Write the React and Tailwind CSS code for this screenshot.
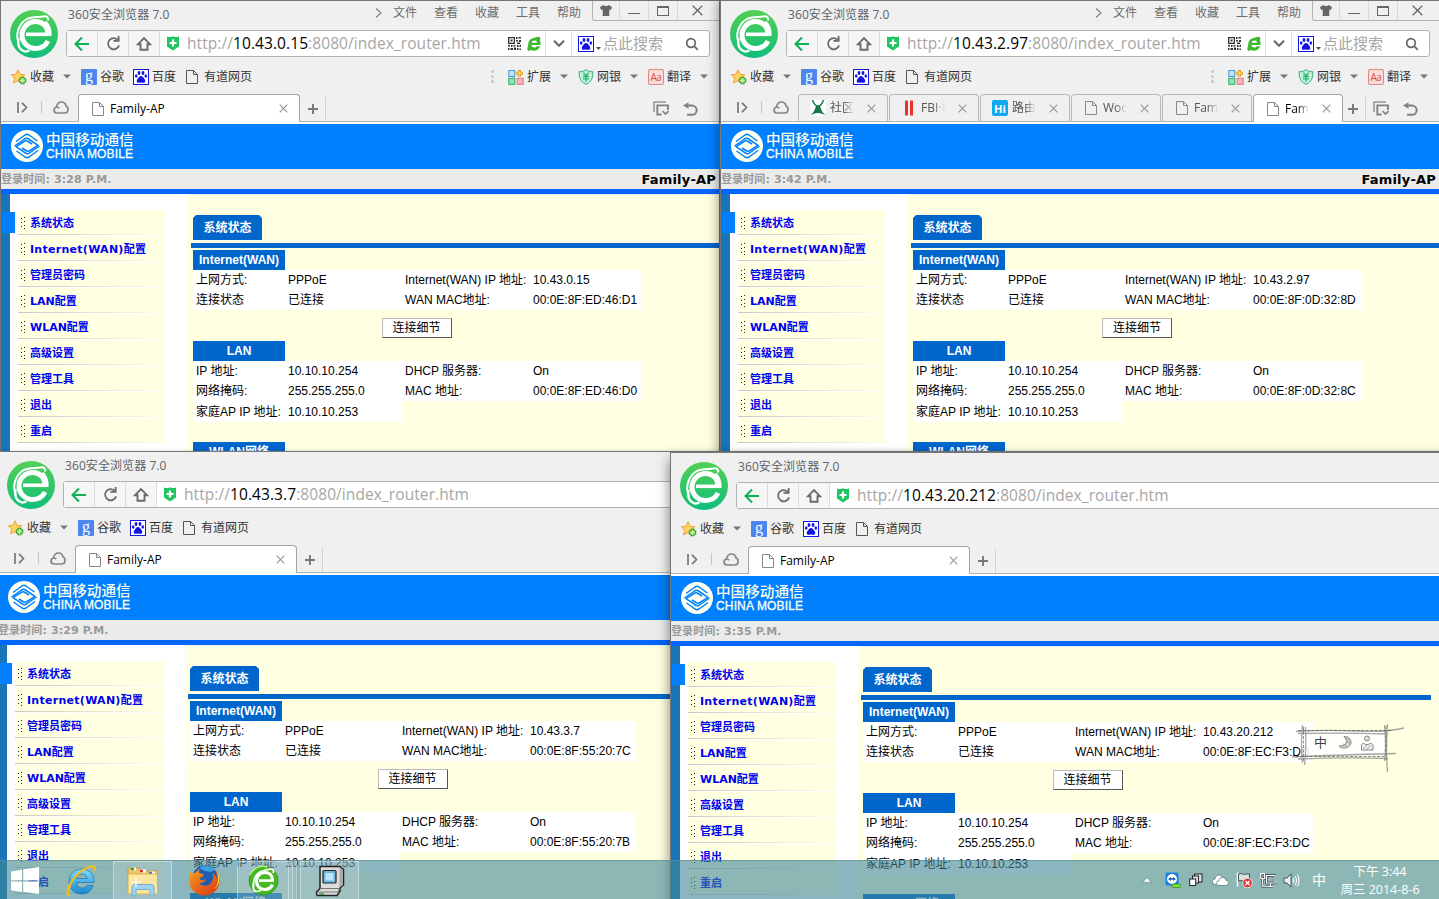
import React from "react";

const UI = "font-['Open_Sans','Noto_Sans_CJK_SC',sans-serif]";
const ARIAL = "font-['Liberation_Sans','Noto_Sans_CJK_SC',sans-serif]";
const VERDANA = "font-['DejaVu_Sans','Noto_Sans_CJK_SC',sans-serif]";

/* ---------- browser icons ---------- */

function BrowserLogo() {
  return (
    <svg className="block h-12 w-12 shrink-0" viewBox="0 0 48 48">
      <defs>
        <linearGradient id="logoGreen" x1="0" y1="0" x2="0" y2="1">
          <stop offset="0" stopColor="#52d053" />
          <stop offset="1" stopColor="#0fbe7c" />
        </linearGradient>
      </defs>
      <circle cx="24" cy="24" r="24" fill="url(#logoGreen)" />
      <g fill="none" stroke="#fff">
        <path d="M38 24.500C38 16 32 11.500 26 11.500c-8 0-14 6-14 13.500S18 38.500 25.500 38.500c6 0 10-2.500 12.500-7.500" strokeWidth="5" />
        <path d="M16 24.300h24.500" strokeWidth="3.600" />
        <path d="M8.500 33C5 24 9 14 16 9.500 22 6 29 7.500 33 6.500c3-1 6 .5 5 4" strokeWidth="2" />
        <path d="M8.500 28c-1 6 0 11 5 13 2 .8 4 .5 6-.5" strokeWidth="2.400" />
      </g>
      <path d="M41.500 26h-6c0-6-1-9-4-12l5-3c4 4 5.500 9 5 15z" fill="#fff" />
    </svg>
  );
}

const Back = () => (
  <svg className="h-4 w-4" viewBox="0 0 16 16" fill="none" stroke="#12b053" strokeWidth="2">
    <path d="M1.500 8H15M8 1.500L1.500 8 8 14.500" />
  </svg>
);
const Reload = () => (
  <svg className="h-[15px] w-[15px]" viewBox="0 0 16 16" fill="none" stroke="#6a6a6a" strokeWidth="1.900">
    <path d="M13 4.500A6 6 0 1 0 14 10M13.500 0V5.300H8" />
  </svg>
);
const Home = () => (
  <svg className="h-4 w-4" viewBox="0 0 16 16" fill="none" stroke="#6a6a6a" strokeWidth="1.900">
    <path d="M4.500 8.200H2L8 2l6 6.200h-2.500v5.600h-7z" />
  </svg>
);
const Shield = () => (
  <svg className="h-[15px] w-3 shrink-0" viewBox="0 0 12 15">
    <path d="M0 .5c2 .8 4 .8 6-.3 2 1.100 4 1.100 6 .3v10L6 14.500 0 10.500z" fill="#1fc463" />
    <path d="M6 3.500v7M2.500 7h7" stroke="#fff" strokeWidth="2.200" />
  </svg>
);
const Qr = () => (
  <svg className="h-[13px] w-[13px] shrink-0" viewBox="0 0 13 13" fill="#333">
    <path fillRule="evenodd" d="M0 0h7v7H0zM1.300 1.300v4.400h4.400V1.300zM2.500 2.500h2v2h-2zM8 0h1.500v2H8zM10.500 0H13v1.500h-2.500zM8 3h2v1.500H8zM11 3h2v2h-2zM9 5.500h3V7H9zM0 8h2v1.500H0zM3 8h1.500v2H3zM5.500 8h2v1.500h-2zM0 11h1.500v2H0zM2.500 11H5v2H2.500zM6 10.500h2V13H6zM9 8h1.500v2H9zM11.500 8H13v2h-1.500zM9 11h1.500v2H9zM11.500 11.500H13V13h-1.500z" />
  </svg>
);
const MiniE = ({ className }) => (
  <svg className={className} viewBox="1 0 14 16">
    <path
      d="M14.500 9H5.500c.3 1.800 1.400 2.500 2.800 2.500 1.100 0 2-.4 2.500-1.200h3.400C13.200 13 11 14.700 8.200 14.700c-1 0-2-.2-2.800-.6C4 15 2.500 15.200 1.800 14.300.9 13 1.500 11 2.200 9.500 2 4.800 4.800 2 8.800 1.700 10.500.6 13.200.3 14 1.300c.6.900.3 2-.2 3 .8 1.300 1 3 .7 4.700z"
      fill="#3fb82f"
    />
    <path d="M5.600 6.800h5.600C11 5.300 9.900 4.500 8.500 4.500 7 4.500 5.900 5.300 5.600 6.800z" fill="#fff" />
  </svg>
);
const Paw = ({ className }) => (
  <svg className={className} viewBox="0 0 16 16">
    <rect x=".5" y=".5" width="15" height="15" fill="#fff" stroke="#1414e6" />
    <g fill="#1414e6">
      <ellipse cx="6" cy="4" rx="1.400" ry="1.900" />
      <ellipse cx="10" cy="4" rx="1.400" ry="1.900" />
      <ellipse cx="3.200" cy="7" rx="1.300" ry="1.700" />
      <ellipse cx="12.800" cy="7" rx="1.300" ry="1.700" />
      <path d="M8 7c1.600 0 2.300 1.600 3.300 2.700 1.200 1.200 1.500 3.800-.6 4.100-1 .1-1.700-.3-2.700-.3s-1.700.4-2.700.3c-2.100-.3-1.800-2.900-.6-4.100C5.700 8.600 6.400 7 8 7z" />
    </g>
  </svg>
);
const SearchGlyph = () => (
  <svg className="h-[14px] w-[14px] shrink-0" viewBox="0 0 14 14" fill="none" stroke="#666" strokeWidth="1.700">
    <circle cx="6" cy="6" r="4.300" />
    <path d="M9.200 9.200L12.800 12.800" />
  </svg>
);
const Star = () => (
  <svg className="h-4 w-4 shrink-0" viewBox="0 0 16 16">
    <path d="M7 .8l2 4.500 4.800.5-3.600 3.400 1 4.800L7 11.600 2.600 14l1-4.800L.3 5.800l4.700-.5z" fill="#ffd45e" stroke="#e8a33a" />
    <path d="M11.500 7.800v7.400M7.800 11.500h7.400" stroke="#2f9a1e" strokeWidth="4" />
    <path d="M11.500 8.800v5.400M8.800 11.500h5.400" stroke="#c5f59a" strokeWidth="2" />
  </svg>
);
const Page = ({ stroke = "#555" }) => (
  <svg className="h-[14px] w-3 shrink-0" viewBox="0 0 12 14" fill="none" stroke={stroke}>
    <path d="M.5.500h7l4 4v9H.5zM7.500.5v4h4" />
  </svg>
);
const Tri = () => (
  <svg className="h-[5px] w-2 shrink-0" viewBox="0 0 8 5">
    <path d="M0 .5h8L4 4.500z" fill="#777" />
  </svg>
);
const ExtIcon = () => (
  <svg className="h-4 w-4 shrink-0" viewBox="0 0 16 16">
    <rect x=".8" y="1.500" width="6" height="6" fill="#c3e0fa" stroke="#4d96cf" />
    <rect x=".8" y="9.300" width="6" height="6" fill="#8ee9b0" stroke="#2fa568" />
    <rect x="9.200" y="9.300" width="6" height="6" fill="#f9b4b4" stroke="#dc7878" />
    <path d="M11.500 1v6.500M8.300 4.200h6.500" stroke="#dd9524" strokeWidth="3" />
    <path d="M11.500 2v4.500M9.300 4.200h4.500" stroke="#ffdf62" strokeWidth="1.300" />
  </svg>
);
const BankIcon = () => (
  <svg className="h-4 w-4 shrink-0" viewBox="0 0 16 16" fill="none" stroke="#2fb07a">
    <path d="M8 .7c2 1.500 4.300 2 6.800 2.100.3 6-1.500 10.200-6.800 12.500C2.700 13 .9 8.800 1.200 2.800 3.700 2.700 6 2.200 8 .7z" fill="#c4f2d9" />
    <path d="M5.300 3.800L8 6.800l2.700-3M8 6.800v6M5 7.500h6M5 9.800h6" strokeWidth="1.300" />
  </svg>
);
const Cloud = () => (
  <svg className="h-[13px] w-4 shrink-0" viewBox="0 0 16 13" fill="none" stroke="#858585" strokeWidth="1.700">
    <path d="M4.300 12C2.300 12 1 10.600 1 9c0-1.500 1-2.600 2.500-3C4 3 6 1 8.500 1c2.200 0 4 1.500 4.400 3.800C14.200 5.300 15 6.700 15 8.300c0 2.200-1.400 3.700-3.500 3.700zM3.500 6c1 0 2 .3 2.700 1.200" />
  </svg>
);
const Cross = ({ stroke = "#999" }) => (
  <svg className="h-[9px] w-[9px] shrink-0" viewBox="0 0 9 9" stroke={stroke} strokeWidth="1.200">
    <path d="M.7.700l7.600 7.600M8.300.7L.7 8.300" />
  </svg>
);

/* ---------- browser chrome ---------- */

function TopMenu() {
  return (
    <div className="ml-auto flex h-full text-[12px] leading-none text-[#6c6c6c]">
      <svg className="mt-[7px] mr-[11px] h-[10px] w-[7px]" viewBox="0 0 7 10" fill="none" stroke="#888" strokeWidth="1.300">
        <path d="M1 .5L6 5 1 9.500" />
      </svg>
      <div className="mt-[6px] mr-[11px] flex gap-[17px]">
        {["文件", "查看", "收藏", "工具", "帮助"].map((t) => (
          <span key={t} className="w-6 whitespace-nowrap">{t}</span>
        ))}
      </div>
      <div className="flex h-5 w-[127px] rounded-bl-[3px] border-b border-l border-[#b4b4b4]">
        <div className="flex w-[27px] items-center justify-center border-r border-[#d8d8d8]">
          <svg className="h-[11px] w-3" viewBox="0 0 12 11" fill="#666">
            <path d="M3.500 0C4.500 1.300 7.500 1.300 8.500 0L12 2l-1 3-1.700-.5V11H2.700V4.500L1 5 0 2z" />
          </svg>
        </div>
        <div className="flex w-[29px] items-center justify-center border-r border-[#d8d8d8]">
          <div className="mt-[6px] h-px w-3 bg-[#666]" />
        </div>
        <div className="flex w-[29px] items-center justify-center border-r border-[#d8d8d8]">
          <div className="h-[10px] w-3 border border-t-2 border-[#666]" />
        </div>
        <div className="flex flex-1 items-center justify-center pr-[2px]">
          <svg className="h-[11px] w-[11px]" viewBox="0 0 11 11" stroke="#666" strokeWidth="1.300">
            <path d="M.7.700l9.600 9.600M10.300.7L.7 10.300" />
          </svg>
        </div>
      </div>
    </div>
  );
}

function AddressBar({ host }) {
  const btn = "flex w-[31px] shrink-0 items-center justify-center border-r border-[#dcdcdc] bg-[#f6f6f6]";
  return (
    <div className="mr-[9px] flex h-[27px] rounded-[3px] border border-[#b2b2b2] bg-white">
      <div className={btn}><Back /></div>
      <div className={btn}><Reload /></div>
      <div className={btn}><Home /></div>
      <div className="flex flex-1 items-center pl-[7px]">
        <Shield />
        <span className="ml-2 text-[15.5px] leading-none tracking-[0.08px] whitespace-nowrap text-[#a6a6a6]">
          http://<span className="text-black">{host}</span>:8080/index_router.htm
        </span>
        <div className="ml-auto flex items-center gap-[6px] pr-1">
          <Qr />
          <MiniE className="h-4 w-[14px]" />
        </div>
      </div>
      <div className="flex w-[26px] items-center justify-center border-l border-[#dcdcdc]">
        <svg className="h-[7px] w-3" viewBox="0 0 12 7" fill="none" stroke="#666" strokeWidth="2">
          <path d="M1 .8l5 5 5-5" />
        </svg>
      </div>
      <div className="flex w-[138px] items-center border-l border-[#dcdcdc] pl-[6px]">
        <Paw className="h-4 w-4 shrink-0" />
        <svg className="mt-[10px] ml-[2px] h-[3px] w-[5px] shrink-0" viewBox="0 0 5 3">
          <path d="M0 0h5L2.500 3z" fill="#555" />
        </svg>
        <span className="ml-[2px] text-[15px] leading-none whitespace-nowrap text-[#a6a6a6]">点此搜索</span>
        <span className="ml-[22px]"><SearchGlyph /></span>
      </div>
    </div>
  );
}

function Bookmarks() {
  return (
    <div className="flex h-[33px] shrink-0 items-center pr-[11px] pl-[10px] text-[12px] leading-none whitespace-nowrap text-[#333]">
      <Star />
      <span className="ml-[3px] w-6">收藏</span>
      <span className="ml-[9px]"><Tri /></span>
      <span className="ml-[10px] flex h-4 w-4 items-center justify-center rounded-[1px] bg-[#4a86ee] pb-[2px] font-['Liberation_Serif',serif] text-[16px] text-white">
        g
      </span>
      <span className="ml-[3px] w-6">谷歌</span>
      <Paw className="ml-[9px] h-4 w-4 shrink-0" />
      <span className="ml-[3px] w-6">百度</span>
      <span className="mr-[6px] ml-[10px]"><Page /></span>
      <span>有道网页</span>
      <div className="ml-auto flex items-center">
        <span className="mr-[14px] flex flex-col gap-[2px]">
          <i className="h-[3px] w-[3px] rounded-full bg-[#c4c4c4]" />
          <i className="h-[3px] w-[3px] rounded-full bg-[#c4c4c4]" />
          <i className="h-[3px] w-[3px] rounded-full bg-[#c4c4c4]" />
        </span>
        <ExtIcon />
        <span className="mr-[9px] ml-[3px] w-6">扩展</span>
        <Tri />
        <span className="ml-[10px]"><BankIcon /></span>
        <span className="mr-[9px] ml-[3px] w-6">网银</span>
        <Tri />
        <span className="ml-[10px] flex h-4 w-4 items-center justify-center rounded-[2px] border border-[#d98a86] bg-[#fbdcd9] text-[10px] tracking-[-0.5px] text-[#d2544f]">
          Aa
        </span>
        <span className="mr-[9px] ml-[3px] w-6">翻译</span>
        <Tri />
      </div>
    </div>
  );
}

function TabIcon({ kind }) {
  if (kind === "x")
    return (
      <svg className="h-4 w-4" viewBox="0 0 16 16">
        <rect width="16" height="16" fill="#fff" />
        <path d="M2.500 0C4 4.500 6 6 8 6s4-1.500 5.500-6" fill="none" stroke="#177a45" strokeWidth="1.500" />
        <path d="M6 6h4l1 3c1 2.500 2.500 4.500 5 6.500-5.500-3.500-10.500-3.500-16 0C2.500 13.500 4 11.500 5 9z" fill="#177a45" />
      </svg>
    );
  if (kind === "bars")
    return (
      <svg className="h-4 w-4" viewBox="0 0 16 16" fill="#e8322c">
        <rect x="4" y=".5" width="3" height="15" rx=".5" />
        <rect x="9" y=".5" width="3" height="15" rx=".5" />
      </svg>
    );
  if (kind === "hi")
    return (
      <span className="flex h-4 w-4 items-center justify-center rounded-[2px] bg-[#10a8f0] text-[11px] leading-none font-bold text-white">
        Hi
      </span>
    );
  return <Page stroke="#888" />;
}

function Tab({ title, kind, active, wide }) {
  return (
    <div
      className={`flex items-center rounded-t-[4px] border border-b-0 pl-[11px] ${wide ? "w-[222px]" : "mr-px w-[90px]"} ${
        active ? "h-7 border-[#a3a3a3] bg-white text-black" : "mb-px h-[27px] border-[#b9b9b9] bg-[#f0f0f0] text-[#555]"
      }`}
    >
      <span className="flex w-4 shrink-0 justify-center">
        <TabIcon kind={kind} />
      </span>
      <span
        className={`ml-1 overflow-hidden text-[12px] leading-[18px] whitespace-nowrap ${
          wide ? "w-[160px]" : "w-6 [mask-image:linear-gradient(to_right,black_55%,transparent)]"
        }`}
      >
        {title}
      </span>
      <span className={wide ? "ml-[9px]" : "ml-[13px]"}>
        <Cross />
      </span>
    </div>
  );
}

function TabStrip({ tabs }) {
  const many = tabs.length > 1;
  return (
    <div className="flex h-[29px] shrink-0 items-end border-b border-[#b2b2b2]">
      <div className="flex h-[28px] w-[77px] shrink-0 items-center">
        <svg className="ml-4 h-[11px] w-[11px]" viewBox="0 0 11 11" fill="none" stroke="#777" strokeWidth="1.700">
          <path d="M1 0v11M5 .8l4.500 4.700L5 10.200" />
        </svg>
        <i className="ml-[13px] h-3 w-px bg-[#c4c4c4]" />
        <span className="ml-[11px]"><Cloud /></span>
      </div>
      <div className="-mb-px flex items-end">
        {tabs.map((t, i) => (
          <Tab key={i} {...t} wide={!many} />
        ))}
      </div>
      <div className={`flex h-6 w-[26px] shrink-0 items-center justify-center border-r border-[#d0d0d0] ${many ? "-ml-1" : ""}`}>
        <svg className="h-[10px] w-[10px]" viewBox="0 0 10 10" stroke="#777" strokeWidth="1.900">
          <path d="M5 0v10M0 5h10" />
        </svg>
      </div>
      <div className="mr-[21px] ml-auto flex h-[25px] items-center gap-[14px]">
        <svg className="h-[15px] w-4" viewBox="0 0 16 15" fill="none">
          <path d="M1 11V1h12" stroke="#999" strokeWidth="1.600" />
          <path d="M8.500 13.500H4.300V4.300H15V9" stroke="#808080" strokeWidth="1.800" />
          <path d="M9.500 10l3 3 3-3" stroke="#808080" strokeWidth="1.600" />
        </svg>
        <svg className="h-[14px] w-[15px]" viewBox="0 0 15 14" fill="none" stroke="#808080" strokeWidth="2">
          <path d="M3 3.500h6a4.600 4.600 0 0 1 0 9.300H4" />
          <path d="M0 3.500L5.500.3v6.400z" fill="#808080" stroke="none" />
        </svg>
      </div>
    </div>
  );
}

/* ---------- router page ---------- */

function MobileLogo() {
  return (
    <div className="flex h-[45px] shrink-0 items-center bg-[#0080ff] pl-[10px] text-[#fdfff0]">
      <svg className="-mt-[2px] h-8 w-8 shrink-0" viewBox="0 0 32 32">
        <circle cx="16" cy="16" r="16" fill="#fdfff0" />
        <g fill="none" stroke="#0080ff" strokeWidth="1.500" strokeLinejoin="round">
          <path d="M5 11.500L14 5q2-1.300 4 0l8.500 6" />
          <path d="M3.500 16L13.500 9q2-1.300 4 0l9.500 6.300-8 5.200q-2 1.300-4 0l-4-2.500" />
          <path d="M27 20.500L18 27q-2 1.300-4 0l-8.500-6" />
          <path d="M28.500 16L18.500 23q-2 1.300-4 0L5 16.700l8-5.200q2-1.300 4 0l4 2.500" />
        </g>
      </svg>
      <div className="mt-px ml-[3px] flex flex-col">
        <span className="text-[14.600px] leading-[15px] font-medium whitespace-nowrap">中国移动通信</span>
        <span className="text-[12px] leading-[13px] tracking-[0.150px] whitespace-nowrap [-webkit-text-stroke:0.300px_#fdfff0]">
          CHINA MOBILE
        </span>
      </div>
    </div>
  );
}

const NAV = ["系统状态", "Internet(WAN)配置", "管理员密码", "LAN配置", "WLAN配置", "高级设置", "管理工具", "退出", "重启"];

function Sidebar() {
  return (
    <aside className="relative flex w-[187px] shrink-0 bg-white">
      <div className="w-[9px] bg-[#1775b8]" />
      <div className="absolute top-[18px] left-px h-[21px] w-[13px] bg-[#0080ff]" />
      <nav className="ml-2 flex w-[148px] flex-col pt-4">
        {NAV.map((t) => (
          <div key={t} className="h-[26px] shrink-0">
            <div className="flex h-6 items-center bg-[#ffffe1] pl-[3px]">
              <svg className="mt-[2px] h-3 w-[5px] shrink-0" viewBox="0 0 5 12" fill="#222">
                <path d="M0 1h1v1H0zM3 0h1v1H3zM0 5h1v1H0zM3 4h1v1H3zM0 9h1v1H0zM3 8h1v1H3zM3 11h1v1H3z" />
              </svg>
              <span
                className={`ml-1 pt-[3px] text-[11px] leading-none font-bold whitespace-nowrap text-[#0000f0] ${VERDANA} ${
                  t.startsWith("Internet") ? "tracking-[0.28px]" : ""
                }`}
              >
                {t}
              </span>
            </div>
            <div className="h-px bg-linear-to-r from-[#c9c9c0] to-[#ffffe1]" />
          </div>
        ))}
      </nav>
    </aside>
  );
}

const SectionHead = ({ children }) => (
  <div className="flex h-5 w-[92px] items-center justify-center bg-[#0066cc] font-bold whitespace-nowrap text-white">{children}</div>
);

function InfoRow({ cells }) {
  const widths = ["w-[92px]", "w-[117px]", "w-[128px]", "flex-1"];
  return (
    <div className="flex h-[20px] items-center bg-white whitespace-nowrap">
      {cells.map((c, i) => (
        <div key={i} className={`shrink-0 pl-[3px] ${widths[i]}`}>{c}</div>
      ))}
    </div>
  );
}

function RouterPage({ time, ip, wanMac, lanMac, tableW, barW }) {
  return (
    <div className={`flex flex-1 flex-col text-[12px] leading-none text-black ${ARIAL}`}>
      <MobileLogo />
      <div className={`flex h-5 shrink-0 items-center justify-between bg-[#ebebeb] pr-[3px] font-bold ${VERDANA}`}>
        <span className="text-[11px] tracking-[0.12px] text-[#999]">登录时间: {time} P.M.</span>
        <span className="text-[13px] tracking-[0.2px]">Family-AP</span>
      </div>
      <div className="h-[5px] shrink-0 bg-[#0066ff]" />
      <div className="flex flex-1">
        <Sidebar />
        <main className="mt-px flex-1 bg-[#ffffe1] pl-[3px]">
          <div className="mt-5 ml-[2px] flex h-[25px] w-[69px] items-center justify-center bg-[#0066cc] text-[12px] font-bold text-white [clip-path:polygon(0_3px,3px_0,66px_0,69px_3px,69px_25px,0_25px)]">
            系统状态
          </div>
          <div className={`mt-[3px] h-[5px] bg-[#0066cc] ${barW}`} />
          <div className={`mt-[2px] ml-[2px] ${tableW}`}>
            <SectionHead>Internet(WAN)</SectionHead>
            <InfoRow cells={["上网方式:", "PPPoE", "Internet(WAN) IP 地址:", ip]} />
            <InfoRow cells={["连接状态", "已连接", "WAN MAC地址:", wanMac]} />
            <div className="flex h-[31px] justify-center pt-2">
              <button className="-ml-px h-5 w-[70px] border border-t-[#bbb] border-r-[#555] border-b-[#555] border-l-[#bbb] bg-white">
                连接细节
              </button>
            </div>
            <SectionHead>LAN</SectionHead>
            <InfoRow cells={["IP 地址:", "10.10.10.254", "DHCP 服务器:", "On"]} />
            <InfoRow cells={["网络掩码:", "255.255.255.0", "MAC 地址:", lanMac]} />
            <div className="w-[209px] bg-white pt-px">
              <InfoRow cells={["家庭AP IP 地址:", "10.10.10.253"]} />
            </div>
            <div className="h-5" />
            <SectionHead>WLAN网络</SectionHead>
          </div>
        </main>
      </div>
    </div>
  );
}

function BrowserWindow({ frame, host, tabs, ...page }) {
  return (
    <section className={`absolute flex flex-col overflow-hidden border border-[#767676] bg-[#f0f0f0] ${UI} ${frame}`}>
      <div className="flex h-[59px] shrink-0">
        <div className="w-[65px] shrink-0 pt-[9px] pl-[9px]">
          <BrowserLogo />
        </div>
        <div className="flex min-w-0 flex-1 flex-col">
          <div className="flex h-[29px] shrink-0">
            <span className="mt-[8px] ml-[2px] text-[12px] leading-none tracking-[0.08px] whitespace-nowrap text-[#5f6368]">
              360安全浏览器 7.0
            </span>
            <TopMenu />
          </div>
          <AddressBar host={host} />
        </div>
      </div>
      <Bookmarks />
      <TabStrip tabs={tabs} />
      <div className="h-[2px] shrink-0 bg-white" />
      <RouterPage {...page} />
    </section>
  );
}

/* ---------- input method bar ---------- */

function ImeBar() {
  return (
    <div className="absolute top-[722px] left-[1290px] h-[52px] w-[116px]">
      <svg className="h-full w-full" viewBox="0 0 116 52" fill="none">
        <rect x="12" y="8" width="84" height="26" fill="#fff" fillOpacity=".88" />
        <g stroke="#8f8f8f" strokeWidth="1.300" opacity=".8">
          <path d="M6 9.500q30-2 60-.5t48-3M8 11.500q40-1 90 .5M2 35q40-2 104-3.500M8 37q50-2 90-.5" />
          <path d="M12.500 3q-2 20 0 38M15.500 5q1 20-1 38M94.500 3q2 20 0 36M97.500 2q-2 26 0 48" />
        </g>
        <g stroke="#444" strokeWidth=".6" strokeDasharray="3 1.500">
          <path d="M8 8.500h94M6 34.500h90M13.500 5v34M96 4v34" />
        </g>
        <g stroke="#888" strokeWidth="1">
          <path d="M54 14.500c5 5 2 9.500-5 9.500 4 4 12 2 12-4 0-3.500-3.500-6-7-5.500z" fill="#d4d4d4" />
          <path d="M55.500 16l4 2M56 19l4 2M53 22l4 2" strokeWidth=".7" />
          <circle cx="77" cy="16.500" r="2.500" fill="#ddd" />
          <path d="M71.500 28v-4c0-3 2-3 3.500-2 1 .8 3 .8 4 0 1.500-1 4-1 4 2v4z" fill="#eee" />
          <path d="M73 27l4-4M76 28l5-5" strokeWidth=".7" />
        </g>
      </svg>
      <span className={`absolute top-[14px] left-[24px] text-[13px] leading-none text-[#444] ${UI}`}>中</span>
    </div>
  );
}

/* ---------- taskbar ---------- */

function StartLogo() {
  return (
    <svg className="h-[27px] w-7" viewBox="0 0 28 27" fill="#fff">
      <path d="M0 4.500l11-1.800v10.500H0zM12.200 2.500L28 0v13.200H12.200zM0 14.400h11V25L0 23.200zM12.200 14.400H28V27l-15.800-2.300z" />
    </svg>
  );
}
function IeIcon() {
  return (
    <svg className="h-8 w-8" viewBox="0 0 32 32">
      <defs>
        <linearGradient id="ieBlue" x1="0" y1="0" x2="0" y2="1">
          <stop offset="0" stopColor="#7fdcfb" />
          <stop offset="1" stopColor="#1b86cf" />
        </linearGradient>
      </defs>
      <path
        d="M29 18.500H11.500c.4 3.700 2.400 5.500 5.500 5.500 2.200 0 3.900-.9 4.900-2.500h6.300C26.400 27 22.200 30 16.800 30 9.500 30 4 25 4 17.500S9.500 5 16.800 5C24.500 5 29.600 10.500 29 18.500zM11.700 14.500h10.400c-.5-3-2.500-4.500-5.100-4.500-2.800 0-4.700 1.500-5.300 4.500z"
        fill="url(#ieBlue)"
        stroke="#1672b5"
        strokeWidth=".7"
      />
      <path d="M5.500 22C1 29 1.500 32 5 30.500M3.500 24C7 14 17 5 25 2.800c4-1 6 .2 4.800 4.200" fill="none" stroke="#f6bd1e" strokeWidth="2.200" />
    </svg>
  );
}
function FolderIcon() {
  return (
    <svg className="h-8 w-8" viewBox="0 0 32 32">
      <path d="M1 4.500C1 3.500 1.600 3 2.500 3H12l2 3h15c1 0 1.500.6 1.500 1.500V28H1z" fill="#e9c667" stroke="#c79b3a" />
      <path d="M4 4h5M13 6h6M22 8h6" stroke="#fff" strokeWidth="3" />
      <path d="M4 4h3" stroke="#2f9a3f" strokeWidth="2.500" />
      <path d="M13 6h3" stroke="#d5382f" strokeWidth="2.500" />
      <path d="M22 8h3" stroke="#2d7fd1" strokeWidth="2.500" />
      <path d="M1 9h29.500v19c0 .6-.5 1-1 1H2c-.6 0-1-.4-1-1z" fill="#fbe6a0" stroke="#d9b452" />
      <path d="M5 31V22c0-1.500 1-2.500 2.500-2.500h17c1.500 0 2.500 1 2.500 2.500v9h-4v-6.500H9V31z" fill="#9fd3f2" stroke="#6caed8" />
      <path d="M9 12v10M4 17h10" stroke="#fff" strokeWidth="1.200" />
    </svg>
  );
}
function FirefoxIcon() {
  return (
    <svg className="h-[31px] w-[31px]" viewBox="0 0 31 31">
      <defs>
        <linearGradient id="fox" x1="0" y1="0" x2="1" y2="1">
          <stop offset="0" stopColor="#f9a11b" />
          <stop offset=".5" stopColor="#e9661a" />
          <stop offset="1" stopColor="#cf3a14" />
        </linearGradient>
      </defs>
      <circle cx="16" cy="13.500" r="13" fill="#1d5fae" />
      <path d="M10 3c4-3 13-3 16 2l-4 2-6-1z" fill="#3b9fe0" />
      <path
        d="M2 6c0 1.500.2 2.500.7 3.500C4 8 5.500 7.500 7 7.500c1-2 2.500-3 4-3.500-1 1.500-1.200 2.500-1 4 2 .3 4 .8 5 2-1 2-3.500 2-4.500 4 1 2 4.500 1 6 0-.5 3-3 4.500-6.500 4 3 3.500 9 3.500 12 0 2.500-3 2.500-7 1.500-10 3 2 4 4 4.500 5.500.3-3-.5-6-2-8.500C30 8.500 31 12 30.800 15.500 30.500 24 24 30.500 15.500 30.500S.3 24 .3 15.500C.3 12 .8 9 2 6z"
        fill="url(#fox)"
      />
      <path d="M28 7c2 6 1.500 13-3 17 3.500-2 5.500-6 5.500-10 0-3-1-5-2.500-7z" fill="#fcd23a" />
    </svg>
  );
}
function Green360Icon() {
  return (
    <svg className="h-[31px] w-[31px]" viewBox="0 0 31 31">
      <circle cx="15.500" cy="15.500" r="14.500" fill="#45b822" stroke="#2f9418" strokeWidth=".8" />
      <path d="M2 10C5 3 12 0 19 2" fill="none" stroke="#b6ef8d" strokeWidth="1.500" />
      <g fill="none" stroke="#fff">
        <path d="M24.500 15.500C24.500 10 21 7.500 17 7.500c-5 0-8.500 3.500-8.500 8.500s3.500 8.500 8 8.500c4 0 6.500-1.500 8-5" strokeWidth="3.200" />
        <path d="M11 15.600h15" strokeWidth="2.600" />
        <path d="M6 22C4 14 9 6.500 16 5.500c3-.5 4.500-2 7.500-1.300 2 .5 2.500 2 1.500 4M5.500 18c-1 5 0 8.500 3.500 8.500 1.500 0 3-.5 4-1.500" strokeWidth="1.700" />
      </g>
    </svg>
  );
}
function PuttyIcon() {
  return (
    <svg className="h-8 w-8" viewBox="0 0 32 32" strokeLinejoin="round">
      <path d="M6 1.500h20l3.500 3v15.500L26 23v3l-3 4.500H3L2.500 27 6 23.500z" fill="#dcdcdc" stroke="#222" strokeWidth="1.500" />
      <path d="M25.500 2.500L29 5v15l-3.500 2.500z" fill="#a8a8a8" />
      <path d="M7 23.500h18M3.500 27h20l2-3" stroke="#777" fill="none" />
      <rect x="9" y="5.500" width="13" height="12.500" rx="1" fill="#6fb6e0" stroke="#222" strokeWidth="1.200" />
      <path d="M11.500 8h8v7.500h-8z" fill="#b9e4fb" />
      <path d="M5 28.800h5" stroke="#39a244" strokeWidth="1.500" />
    </svg>
  );
}

function Tray() {
  return (
    <div className="ml-auto flex h-full items-center text-white">
      <svg className="h-[6px] w-[10px]" viewBox="0 0 9 5"><path d="M.5 4.500L4.500.5l4 4z" fill="#fff" stroke="#57777a" strokeWidth=".5" /></svg>
      <svg className="ml-[13px] h-4 w-4" viewBox="0 0 16 16">
        <rect x=".5" y=".5" width="13" height="13" rx="2" fill="#1a7fe0" />
        <circle cx="7" cy="7" r="5" fill="#fff" />
        <path d="M3 7l3-2v1.300h2V5l3 2-3 2V7.700H6V9z" fill="#1a5fc0" />
        <rect x="7" y="12" width="8.500" height="3.500" rx="1" fill="#7be03c" stroke="#2c8f12" strokeWidth=".7" />
      </svg>
      <svg className="ml-2 h-[14px] w-[14px]" viewBox="0 0 14 14" fill="#d8e4e4" stroke="#222">
        <rect x="5.500" y="1" width="7.500" height="8" />
        <rect x="3.500" y="3" width="6" height="7" />
        <rect x=".7" y="6" width="6" height="6.500" fill="#fff" />
      </svg>
      <svg className="ml-[9px] h-3 w-[17px]" viewBox="0 0 17 12" fill="#fff" stroke="#476a6d" strokeWidth=".7">
        <path d="M4 10.500C1.500 10.500.5 9 .5 7.500S1.500 5 3 5c0-2.500 2-4 4-4 1.500 0 2.700.7 3.300 2" />
        <path d="M7 11.500c-1.500 0-2.500-1-2.500-2.300S5.500 7 6.800 7C7 4.800 8.500 3.500 10.400 3.500c1.800 0 3.200 1.200 3.500 2.800 1.600.1 2.600 1.200 2.600 2.600s-1 2.600-2.500 2.600z" />
      </svg>
      <svg className="ml-[7px] h-4 w-[17px]" viewBox="0 0 17 16">
        <path d="M1.500.5v14" stroke="#fff" strokeWidth="1.500" />
        <path d="M2.500 2c3-1.500 4.500 1.500 8 0h3v7c-4 1.500-6-1.500-11 0z" fill="#d4e2e2" stroke="#333" strokeWidth=".8" />
        <circle cx="11.500" cy="11" r="4.700" fill="#e0322c" stroke="#fff" strokeWidth=".7" />
        <path d="M9.500 9l4 4M13.500 9l-4 4" stroke="#fff" strokeWidth="1.500" />
      </svg>
      <svg className="ml-[7px] h-[15px] w-4" viewBox="0 0 16 15" fill="none">
        <g id="net">
          <path d="M.7.700h4v5h-4zM2.700 5.700v7.500h5M6.500 2.500h8.500v7.500H6.500zM10.500 10v3M8 13.300h5" stroke="#2b3d3f" strokeWidth="2.400" />
          <path d="M.7.700h4v5h-4zM2.700 5.700v7.500h5M6.500 2.500h8.500v7.500H6.500zM10.500 10v3M8 13.300h5" stroke="#fff" strokeWidth="1.200" />
        </g>
      </svg>
      <svg className="ml-[7px] h-[15px] w-[17px]" viewBox="0 0 17 15" fill="none" stroke="#fff">
        <path d="M1 5h3l4-4v13l-4-4H1z" fill="#e6efef" stroke="#333" strokeWidth=".8" />
        <path d="M10 5c1 1.500 1 3.500 0 5M12 3c2 2.500 2 6.500 0 9M14.300 1.500c2.300 3.300 2.300 8.700 0 12" strokeWidth="1.100" />
      </svg>
      <span className="ml-3 text-[14px] leading-none">中</span>
      <div className="mt-[2px] ml-[12px] flex w-[84px] flex-col items-center text-[12.500px] leading-[18px] whitespace-nowrap">
        <span>下午 3:44</span>
        <span>周三 2014-8-6</span>
      </div>
      <div className="w-[17px]" />
    </div>
  );
}

function Taskbar() {
  const running = "flex h-full items-center justify-center border border-b-0 border-white/40 bg-white/15";
  return (
    <footer className={`absolute bottom-0 left-0 flex h-[39px] w-[1439px] items-center border-t border-[#5d8f98]/70 bg-[#418796]/60 ${UI}`}>
      <div className="ml-[11px]"><StartLogo /></div>
      <div className="ml-[26px]"><IeIcon /></div>
      <div className={`ml-4 w-[59px] ${running}`}><FolderIcon /></div>
      <div className="ml-[17px]"><FirefoxIcon /></div>
      <div className={`ml-[17px] w-[52px] ${running}`}><Green360Icon /></div>
      <div className="h-full w-1 border-r border-white/40 bg-white/15" />
      <div className="h-full w-1 border-r border-white/30 bg-white/10" />
      <div className={`ml-[3px] w-[59px] ${running}`}><PuttyIcon /></div>
      <Tray />
    </footer>
  );
}

const single = [{ title: "Family-AP", active: true }];
const many = [
  { title: "社区", kind: "x" },
  { title: "FBI·档", kind: "bars" },
  { title: "路由", kind: "hi" },
  { title: "Woo" },
  { title: "Fam" },
  { title: "Fam", active: true },
];

export default function App() {
  return (
    <div className="relative h-[899px] w-[1439px] overflow-hidden bg-[#f0f0f0]">
      <BrowserWindow
        frame="left-0 top-0 h-[460px] w-[720px]"
        host="10.43.0.15" tabs={single} time="3:28" ip="10.43.0.15"
        wanMac="00:0E:8F:ED:46:D1" lanMac="00:0E:8F:ED:46:D0" tableW="w-[448px]" barW="w-full"
      />
      <BrowserWindow
        frame="left-[720px] top-0 h-[460px] w-[720px] shadow-[0_0_12px_rgba(0,0,0,0.5)]"
        host="10.43.2.97" tabs={many} time="3:42" ip="10.43.2.97"
        wanMac="00:0E:8F:0D:32:8D" lanMac="00:0E:8F:0D:32:8C" tableW="w-[449px]" barW="w-full"
      />
      <BrowserWindow
        frame="left-[-3px] top-[451px] h-[460px] w-[1460px] shadow-[0_2px_6px_rgba(0,0,0,0.3)]"
        host="10.43.3.7" tabs={single} time="3:29" ip="10.43.3.7"
        wanMac="00:0E:8F:55:20:7C" lanMac="00:0E:8F:55:20:7B" tableW="w-[446px]" barW="w-full"
      />
      <BrowserWindow
        frame="left-[670px] top-[452px] h-[460px] w-[1460px] shadow-[0_7px_12px_rgba(0,0,0,0.5)]"
        host="10.43.20.212" tabs={single} time="3:35" ip="10.43.20.212"
        wanMac="00:0E:8F:EC:F3:DD" lanMac="00:0E:8F:EC:F3:DC" tableW="w-[450px]" barW="w-[570px]"
      />
      <ImeBar />
      <Taskbar />
    </div>
  );
}
